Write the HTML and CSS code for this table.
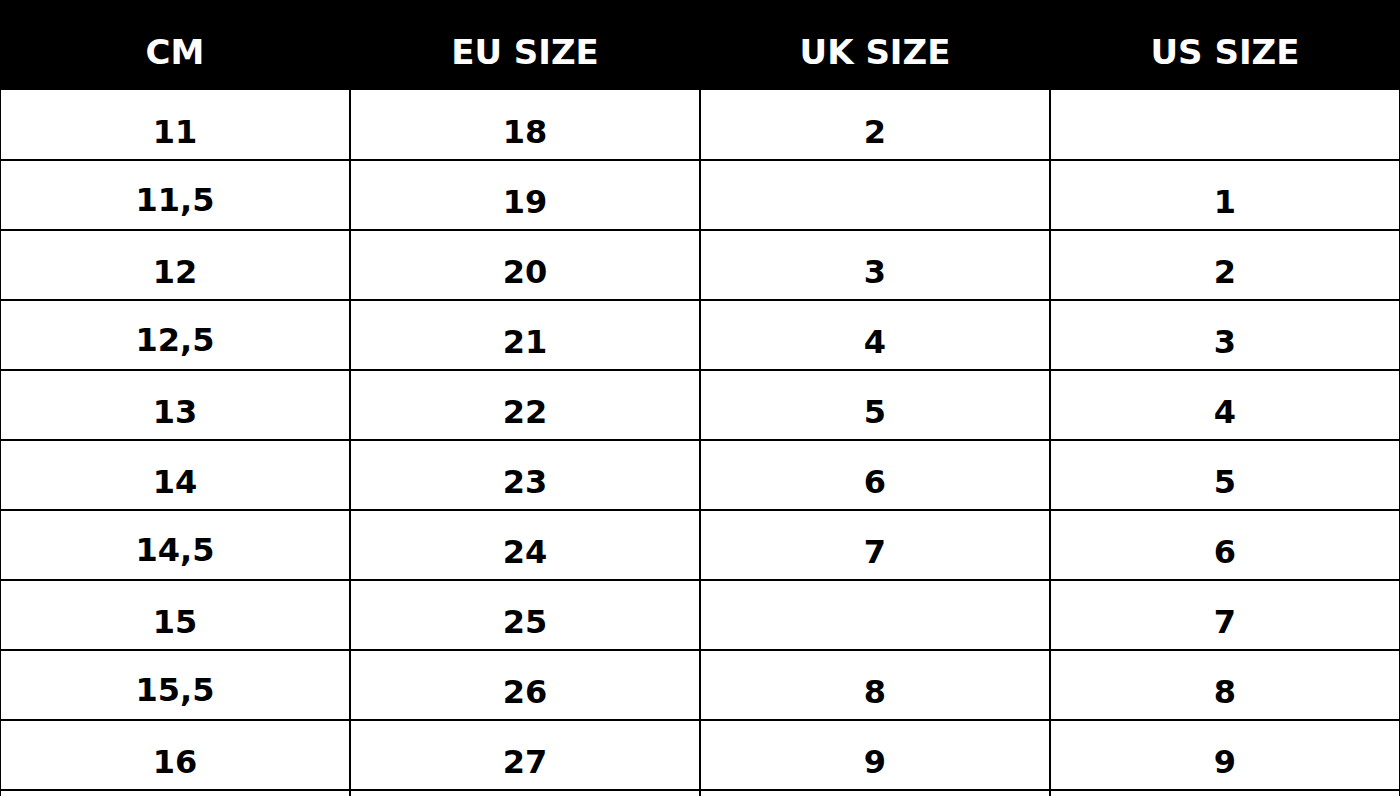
FILE: index.html
```html
<!DOCTYPE html>
<html lang="en">
<head>
<meta charset="utf-8">
<title>Size chart</title>
<link rel="stylesheet" href="styles.css">
</head>
<body>
<div class="chart">
  <div class="row head">
    <div class="cell">CM</div>
    <div class="cell">EU SIZE</div>
    <div class="cell">UK SIZE</div>
    <div class="cell">US SIZE</div>
  </div>
  <div class="row"><div class="cell">11</div><div class="cell">18</div><div class="cell">2</div><div class="cell"></div></div>
  <div class="row"><div class="cell dec">11,5</div><div class="cell">19</div><div class="cell"></div><div class="cell">1</div></div>
  <div class="row"><div class="cell">12</div><div class="cell">20</div><div class="cell">3</div><div class="cell">2</div></div>
  <div class="row"><div class="cell dec">12,5</div><div class="cell">21</div><div class="cell">4</div><div class="cell">3</div></div>
  <div class="row"><div class="cell">13</div><div class="cell">22</div><div class="cell">5</div><div class="cell">4</div></div>
  <div class="row"><div class="cell">14</div><div class="cell">23</div><div class="cell">6</div><div class="cell">5</div></div>
  <div class="row"><div class="cell dec">14,5</div><div class="cell">24</div><div class="cell">7</div><div class="cell">6</div></div>
  <div class="row"><div class="cell">15</div><div class="cell">25</div><div class="cell"></div><div class="cell">7</div></div>
  <div class="row"><div class="cell dec">15,5</div><div class="cell">26</div><div class="cell">8</div><div class="cell">8</div></div>
  <div class="row"><div class="cell">16</div><div class="cell">27</div><div class="cell">9</div><div class="cell">9</div></div>
  <div class="row"><div class="cell"></div><div class="cell"></div><div class="cell"></div><div class="cell"></div></div>
</div>
</body>
</html>
```

FILE: styles.css
```css
html, body {
  margin: 0;
  padding: 0;
  background: #fff;
  overflow: hidden;
}

body {
  font-family: "DejaVu Sans", "Liberation Sans", sans-serif;
  font-weight: bold;
  color: #000;
}

.chart {
  width: 1402px;
  margin-left: -1px;
  display: flex;
  flex-direction: column;
}

.row {
  display: grid;
  grid-template-columns: 350px 350px 350px 352px;
  height: 70px;
  box-sizing: border-box;
  border-bottom: 2px solid #000;
  flex: none;
}

.row.head + .row {
  height: 71px;
}

.row .cell {
  border-left: 2px solid #000;
  font-size: 32px;
  line-height: 37px;
  text-align: center;
  padding-top: 23px;
  box-sizing: border-box;
}

.row .cell.dec {
  padding-top: 21px;
}

.row .cell:last-child {
  border-right: 2px solid #000;
}

.row.head + .row .cell {
  padding-top: 24px;
}

.row.head {
  height: 90px;
  border-bottom: 0;
  background: #000;
}

.row.head .cell {
  color: #fff;
  font-size: 34px;
  line-height: 40px;
  padding-top: 32px;
  border-color: #000;
}
```
